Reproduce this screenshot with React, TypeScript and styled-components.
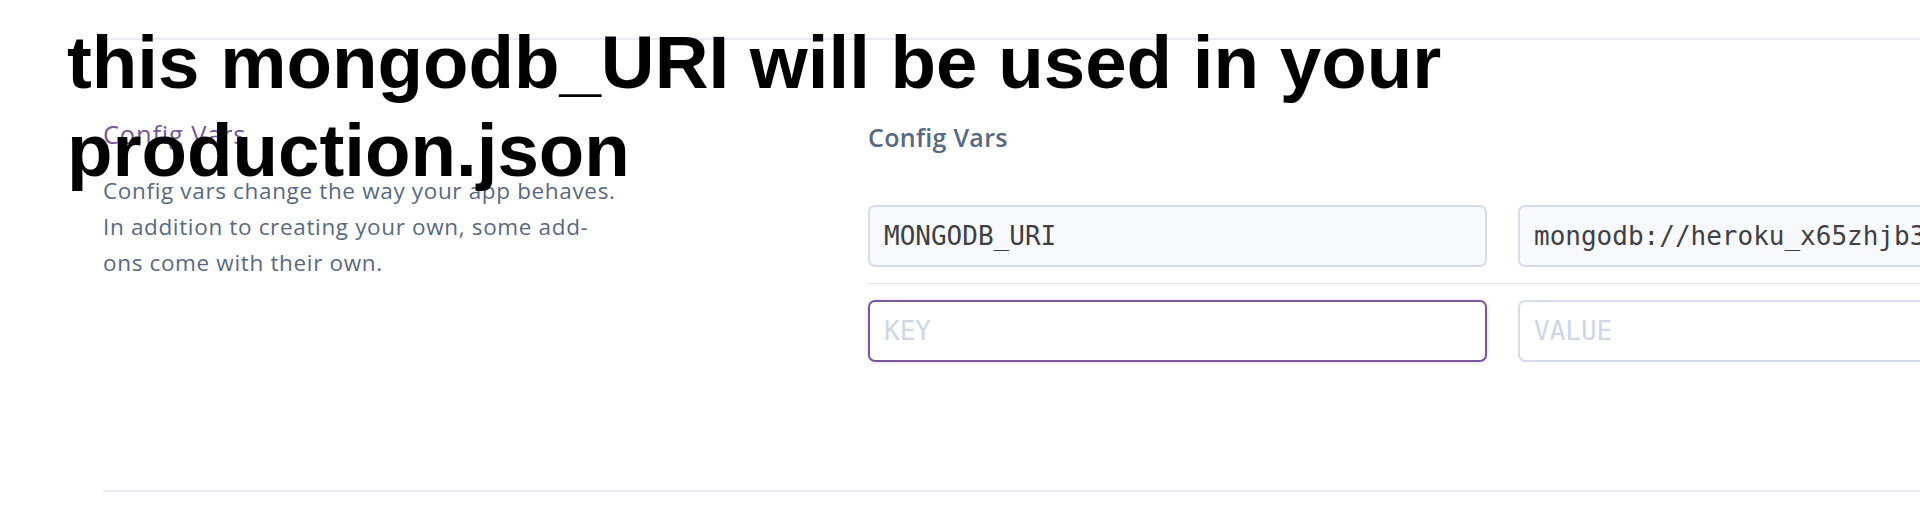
import React from "react";
import styled, { createGlobalStyle } from "styled-components";

const Global = createGlobalStyle`
  html, body {
    margin: 0;
    padding: 0;
    background: #ffffff;
    overflow: hidden;
  }
  body {
    width: 1920px;
    height: 522px;
    font-family: "Open Sans", "Noto Sans", sans-serif;
  }
`;

const Page = styled.div`
  position: relative;
  width: 1920px;
  height: 522px;
  padding: 38px 0 0 103px;
  box-sizing: border-box;
  overflow: hidden;
`;

const Section = styled.section`
  display: flex;
  width: 2600px;
  border-top: 2px solid #e8ebf3;
  border-bottom: 2px solid #e8ebf3;
  padding: 78px 0 128px;
  box-sizing: border-box;
`;

const Aside = styled.div`
  width: 765px;
  flex-shrink: 0;
  display: flex;
  flex-direction: column;
`;

const AsideTitle = styled.h3`
  margin: 0;
  font-family: "Open Sans", sans-serif;
  font-weight: 400;
  font-size: 25.5px;
  letter-spacing: 0.8px;
  line-height: 32px;
  color: #79589f;
`;

const AsideText = styled.p`
  margin: 23px 0 0;
  width: 522px;
  font-family: "Open Sans", sans-serif;
  font-size: 22.5px;
  letter-spacing: 0.65px;
  line-height: 36px;
  color: #596981;
`;

const Main = styled.div`
  flex: 1;
  display: flex;
  flex-direction: column;
  padding-top: 3px;
`;

const Label = styled.h4`
  margin: 0 0 52px;
  font-family: "Open Sans", sans-serif;
  font-weight: 600;
  font-size: 25px;
  letter-spacing: 0.3px;
  line-height: 32px;
  color: #596981;
`;

const Row = styled.div<{ $divider?: boolean }>`
  display: flex;
  gap: 31px;
  padding: ${(p) => (p.$divider ? "0 0 16px" : "16px 0 0")};
  border-bottom: ${(p) => (p.$divider ? "1px solid #e3e7ef" : "none")};
`;

const Field = styled.div<{ $filled?: boolean; $focused?: boolean }>`
  width: 619px;
  height: 62px;
  box-sizing: border-box;
  flex-shrink: 0;
  display: flex;
  align-items: center;
  padding: 0 14px;
  border-radius: 7px;
  border: 2px solid ${(p) => (p.$focused ? "#79589f" : "#d6dcea")};
  background: ${(p) => (p.$filled ? "#f8f9fc" : "#ffffff")};
  box-shadow: ${(p) => (p.$focused ? "0 0 4px rgba(121, 88, 159, 0.25)" : "none")};
  font-family: "DejaVu Sans Mono", "Liberation Mono", monospace;
  font-size: 26px;
  color: ${(p) => (p.$filled ? "#3f3f44" : "#cfd7e6")};
  white-space: nowrap;
  overflow: hidden;
`;

const Overlay = styled.h1`
  position: absolute;
  left: 67px;
  top: 19px;
  margin: 0;
  font-family: "Liberation Sans", Arial, sans-serif;
  font-weight: 700;
  font-size: 74.5px;
  line-height: 88px;
  color: #000000;
  width: 1500px;
`;

export default function App() {
  return (
    <>
      <Global />
      <Page>
        <Section>
          <Aside>
            <AsideTitle>Config Vars</AsideTitle>
            <AsideText>
              Config vars change the way your app behaves. In addition to creating your own, some add-ons come with their own.
            </AsideText>
          </Aside>
          <Main>
            <Label>Config Vars</Label>
            <Row $divider>
              <Field $filled>MONGODB_URI</Field>
              <Field $filled>mongodb://heroku_x65zhjb3:8k2lq0v9@ds011432.mlab.com:11432/heroku_x65zhjb3</Field>
            </Row>
            <Row>
              <Field $focused>KEY</Field>
              <Field>VALUE</Field>
            </Row>
          </Main>
        </Section>
        <Overlay>
          this mongodb_URI will be used in your
          <br />
          production.json
        </Overlay>
      </Page>
    </>
  );
}
